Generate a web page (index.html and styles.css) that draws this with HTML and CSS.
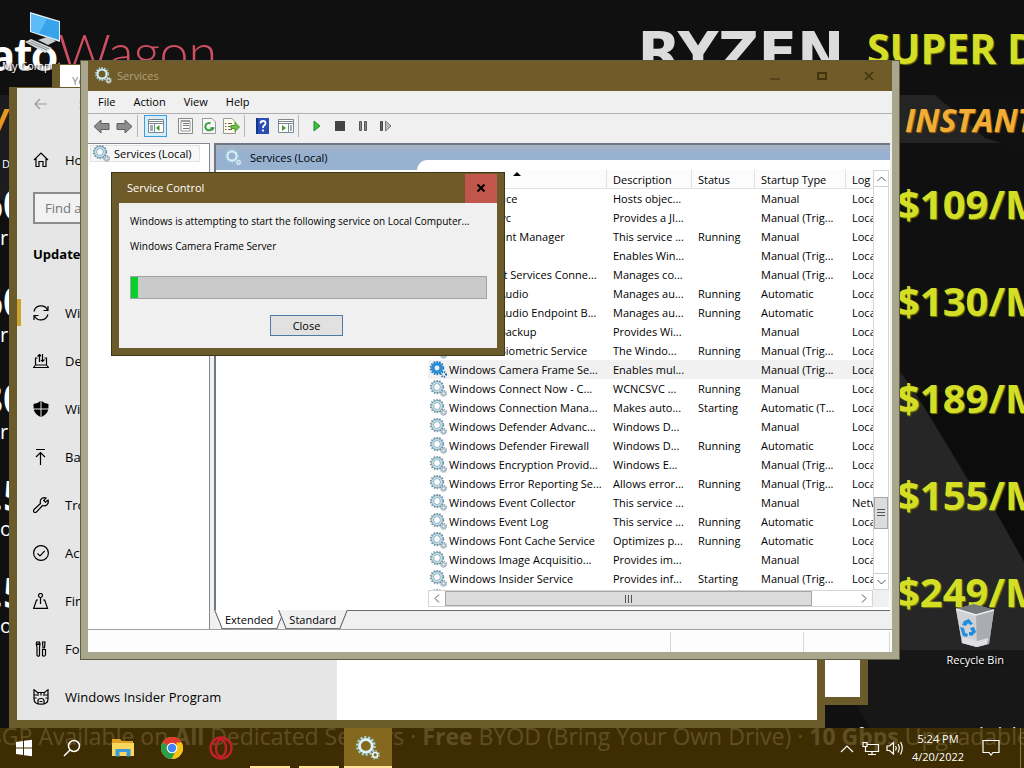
FILE: index.html
```
<!DOCTYPE html>
<html lang="en">
	<head>
		<meta charset="UTF-8">
		<title>Services</title>
		<link rel="stylesheet" href="styles.css">
	</head>
	<body>
		<!-- shared icons -->
		<svg class="defs" aria-hidden="true">
			<symbol id="gears" viewBox="0 0 17 17">
				<circle cx="7" cy="7" r="6.3" fill="none" stroke="#6f8f9d" stroke-width="1.8" stroke-dasharray="1.5 1.33"/>
				<circle cx="7" cy="7" r="4.4" fill="none" stroke="#7195a5" stroke-width="3"/>
				<circle cx="7" cy="7" r="4.4" fill="none" stroke="#bfdeea" stroke-width="1.9"/>
				<circle cx="13.6" cy="13.4" r="2.7" fill="none" stroke="#71899a" stroke-width="1.4" stroke-dasharray="1.1 1"/>
				<circle cx="13.6" cy="13.4" r="1.7" fill="none" stroke="#a9bfca" stroke-width="1.6"/>
			</symbol>
			<symbol id="gears-on" viewBox="0 0 17 17">
				<circle cx="7" cy="7" r="6.3" fill="none" stroke="#1272bd" stroke-width="1.8" stroke-dasharray="1.5 1.33"/>
				<circle cx="7" cy="7" r="4.2" fill="none" stroke="#2c8fd6" stroke-width="3.6"/>
				<circle cx="13.6" cy="13.4" r="2.4" fill="none" stroke="#1f6fae" stroke-width="2" stroke-dasharray="1.1 1"/>
			</symbol>
			<symbol id="gears-lit" viewBox="0 0 17 17">
				<circle cx="7" cy="7" r="6.1" fill="none" stroke="#9fd3e2" stroke-width="1.8" stroke-dasharray="1.5 1.24"/>
				<circle cx="7" cy="7" r="4.5" fill="none" stroke="#d8f1f7" stroke-width="2"/>
				<circle cx="13.6" cy="13.4" r="2.7" fill="none" stroke="#a9cbd8" stroke-width="1.2" stroke-dasharray="1.1 1"/>
				<circle cx="13.6" cy="13.4" r="1.7" fill="none" stroke="#e4f4f8" stroke-width="1.2"/>
			</symbol>
		</svg>

		<div class="wallpaper">
			<svg class="shapes" viewBox="0 0 1024 768" preserveAspectRatio="none" aria-hidden="true">
				<path d="M0 95H30V200H0z" fill="#1c1c1e"/>
				<path d="M880 95H1024V143H880z" fill="#242424"/>
				<path d="M935 95H1024V150L985 138L955 112z" fill="#111112"/>
				<path d="M880 372H900L915 392L968 480L1024 505V650H880z" fill="#262626"/>
				<path d="M915 392L970 480H1024V392z" fill="#0c0c0c"/>
				<path d="M992 505L1024 562V490H984z" fill="#0c0c0c"/>
				<path d="M825 650H1024V728H870z" fill="#171717"/>
			</svg>
			<div class="logo"><b>ato</b><i>Wagon</i></div>
			<div class="ryzen">RYZEN</div>
			<div class="super">SUPER DEALS</div>
			<div class="instant">INSTANT</div>
			<div class="edge-w">W</div>
			<div class="edge-d">D</div>
			<div class="specs">
				<p><b>60</b><span>re</span></p>
				<p><b>60</b><span>re</span></p>
				<p><b>80</b><span>r</span></p>
				<p><b>0.5</b><span>o</span></p>
				<p><b>0.5</b><span>o</span></p>
			</div>
			<div class="prices">
				<p>$109/Mo</p>
				<p>$130/Mo</p>
				<p>$189/Mo</p>
				<p>$155/Mo</p>
				<p>$249/Mo</p>
			</div>
			<div class="banner">BGP Available on <b>All</b> Dedicated Servers · <b>Free</b> BYOD (Bring Your Own Drive) · <b>10 Gbps</b> Upgradable</div>
		</div>

		<a class="shortcut computer" href="#">
			<svg width="36" height="44" viewBox="0 0 36 44">
				<path d="M5 0L35 9V30L5 20z" fill="#dff1fa"/>
				<path d="M6 2L34 10V28L6 19z" fill="#36a3ea"/>
				<path d="M6 2L22 7L14 22L6 19z" fill="#5cbcf5"/>
				<path d="M13 28L22 25L31 29L23 33z" fill="#c7cdd0"/>
				<path d="M0 30L6 27L27 36L20 41z" fill="#d5d8da"/>
				<path d="M3 30L22 38M6 29L24 37" stroke="#8b9094" fill="none"/>
			</svg>
			<span>My Computer</span>
		</a>
		<a class="shortcut bin" href="#">
			<svg width="40" height="44" viewBox="0 0 40 44">
				<path d="M1 5L19 0L39 6L34 40L22 43L7 39z" fill="#b9bcc0"/>
				<path d="M1 5L19 0L39 6L21 11z" fill="#77787a"/>
				<path d="M1 5L21 11L22 43L7 39z" fill="#cfd1d4"/>
				<path d="M21 11L39 6L34 40L22 43z" fill="#a9acb0"/>
				<path d="M1 5L21 11L39 6" fill="none" stroke="#eceeef" stroke-width="1.5"/>
				<path d="M8 33L22 37L33 34L32 40L22 43L7 39z" fill="#dedfe2"/>
				<path d="M9 17l5-2 4 5-3 1-2-2-2 3-4-1zM5 23l4 1 1 5 3 1-1 3-4-1zM15 24l4-1 2 5-4 4-3-1v-3h3z" fill="#1f8ee0"/>
			</svg>
			<span>Recycle Bin</span>
		</a>

		<div class="window back-window"><div class="page">Yo</div></div>

		<div class="window settings">
			<div class="sidebar">
				<div class="top">
					<button aria-label="Back"><svg width="14" height="12" viewBox="0 0 14 12"><path d="M13 6H1M6 1L1 6L6 11"/></svg></button>
					<span>Settings</span>
				</div>
				<a class="item home" href="#"><svg width="16" height="16" viewBox="0 0 16 16"><path d="M1 8L8 1L15 8M3 6.5V14.5H6V9.500H10V14.500H13V6.500"/></svg>Home</a>
				<input type="text" placeholder="Find a setting" aria-label="Find a setting">
				<h2>Update &amp; Security</h2>
				<a class="item current" href="#"><svg width="16" height="16" viewBox="0 0 16 16"><path d="M1 6.500A7.200 7.200 0 0 1 14.500 5M14.900 9.500A7.200 7.200 0 0 1 1.500 11M15 1V5.500H10.500M1 15V10.500H5.500"/></svg>Windows Update</a>
				<a class="item" href="#"><svg width="16" height="16" viewBox="0 0 16 16"><path d="M4.500 5H2.500V12H13.500V5H11.500M2.500 12L.5 14.500H15.500L13.500 12M6.500 9V1.500M4.500 3.500L6.500 1.500L8 3M9.500 1V8.500M8 7L9.500 8.500L11.500 6.500"/></svg>Delivery Optimization</a>
				<a class="item" href="#"><svg width="16" height="16" viewBox="0 0 16 16"><path class="solid" d="M7.500 0L7.500 7.500H.6L.5 3Q4 3 7.500 0zM8.500 0Q12 3 15.500 3L15.400 7.500H8.500zM.7 8.500H7.500V16Q2 13.500.7 8.500zM8.500 8.500H15.300Q14 13.500 8.500 16z"/></svg>Windows Security</a>
				<a class="item" href="#"><svg width="16" height="16" viewBox="0 0 16 16"><path d="M3 .5H12M7.500 16V3.500M3 8L7.500 3.500L12 8"/></svg>Backup</a>
				<a class="item" href="#"><svg width="16" height="16" viewBox="0 0 16 16"><path d="M1 12.500L7.500 6.500Q6.500 3 9 1.300Q11 .2 13 1L10.800 3.500L12.500 5.200L15 3Q16 6 14 7.800Q12 9.500 9.500 8.500L3.500 15Q2 16 1 15Q0 13.800 1 12.500z"/></svg>Troubleshoot</a>
				<a class="item" href="#"><svg width="16" height="16" viewBox="0 0 16 16"><circle cx="8" cy="8" r="7.400"/><path d="M4.500 8.500L7 11L11.800 5.800"/></svg>Activation</a>
				<a class="item" href="#"><svg width="16" height="16" viewBox="0 0 16 16"><circle cx="7.500" cy="2.500" r="2"/><path d="M7.500 4.500V11M5 7H3.500L.7 15.400H14.500L11.700 7H10"/></svg>Find my device</a>
				<a class="item" href="#"><svg width="16" height="16" viewBox="0 0 16 16"><path d="M4 .8Q3 2 3.500 4Q4 5.500 4 7V14.500Q5 16 6.500 14.500V7Q6.500 5 7 3.500Q7.200 1.800 6 .8V3.500H4zM9.500 1H12L11.500 7H10zM9.500 8.500H12.500V14Q11 16 9.500 14.500z"/></svg>For developers</a>
				<a class="item" href="#"><svg width="16" height="16" viewBox="0 0 16 16"><path d="M1 .8L4.500 3.500H11.500L15 .8V10Q15 15.200 8 15.200Q1 15.200 1 10zM1 6H4M1 9H3.500M12 6H15M12.500 9H15M5 15V11.500Q5 9.500 8 9.500Q11 9.500 11 11.500V15M5 4V7M8 4V6.500M11 4V7M6.500 12.500H9.500"/></svg>Windows Insider Program</a>
			</div>
		</div>

		<div class="window services">
			<div class="titlebar">
				<svg class="gear"><use href="#gears-lit"/></svg>
				<span>Services</span>
				<button aria-label="Minimize"><svg width="12" height="12" viewBox="0 0 12 12"><path d="M1 8H11V10H1z" fill="#54441c"/></svg></button>
				<button aria-label="Maximize"><svg width="12" height="12" viewBox="0 0 12 12"><path d="M2 3H10V9H2z" fill="none" stroke="#42340f" stroke-width="2"/></svg></button>
				<button aria-label="Close"><svg width="12" height="12" viewBox="0 0 12 12"><path d="M2 2L10 10M10 2L2 10" stroke="#42340f" stroke-width="1.600"/></svg></button>
			</div>
			<div class="menu">
				<button>File</button><button>Action</button><button>View</button><button>Help</button>
			</div>
			<div class="toolbar">
				<button aria-label="Back"><svg width="17" height="15" viewBox="0 0 17 15"><path d="M1 7.500L8 1V4.500H16V10.500H8V14z" fill="#8d8d8d" stroke="#5e5e5e"/></svg></button>
				<button aria-label="Forward"><svg width="17" height="15" viewBox="0 0 17 15"><path d="M16 7.500L9 1V4.500H1V10.500H9V14z" fill="#8d8d8d" stroke="#5e5e5e"/></svg></button>
				<i></i>
				<button class="pressed" aria-label="Show or hide console tree"><svg width="16" height="14" viewBox="0 0 16 14"><path d="M.5.5H15.500V13.500H.5z" fill="#fff" stroke="#7c8790"/><path d="M1 2.500H15M1 4.500H15M6.500 5V13" stroke="#7c8790"/><path d="M2 7H5M2 9H5M2 11H5" stroke="#3d5f7d"/><path d="M11.500 6V12L8 9z" fill="#3f9d2b"/></svg></button>
				<button aria-label="Properties"><svg width="16" height="16" viewBox="0 0 16 16"><path d="M.5.5H14.500V15.500H.5z" fill="#f6f6f6" stroke="#8b8b8b"/><path d="M3 3H12V13H3z" fill="#fff" stroke="#999"/><path d="M5 5.500H11M5 7.500H11M5 10.500H11M3 3H12" stroke="#777"/></svg></button>
				<button aria-label="Refresh"><svg width="14" height="16" viewBox="0 0 14 16"><path d="M.5.5H10L13.500 4V15.500H.5z" fill="#f8f8f8" stroke="#999"/><path d="M10.500 9A3.600 3.600 0 1 1 8.500 5.500" fill="none" stroke="#35a23b" stroke-width="2"/><path d="M7.500 9.500H13L10.500 13z" fill="#35a23b"/></svg></button>
				<button aria-label="Export list"><svg width="17" height="16" viewBox="0 0 17 16"><path d="M.5.5H9L12.500 4V15.500H.5z" fill="#fffbe9" stroke="#999"/><path d="M2 5.500H3.500M5 5.500H9M2 8.500H3.500M5 8.500H9M2 11.500H3.500M5 11.500H9" stroke="#666"/><path d="M8 7.500H12V4.500L16.500 9L12 13.500V10.500H8z" fill="#6fc04b" stroke="#4a9a2c"/></svg></button>
				<i></i>
				<button aria-label="Help"><svg width="13" height="16" viewBox="0 0 13 16"><path d="M0 0H13V16H0z" fill="#2a4eb5"/><path d="M0 0H2V16H0z" fill="#16348c"/><path d="M4.500 5.500Q4.500 3 7 3Q9.500 3 9.500 5.200Q9.500 6.500 8 7.500Q7 8.300 7 10M7 11.500V13.500" fill="none" stroke="#fff" stroke-width="1.800"/></svg></button>
				<button aria-label="Show or hide action pane"><svg width="16" height="14" viewBox="0 0 16 14"><path d="M.5.5H15.500V13.500H.5z" fill="#fff" stroke="#7c8790"/><path d="M1 2.500H15M1 4.500H15M10.500 5V13" stroke="#7c8790"/><path d="M12 7H14M12 9H14M12 11H14" stroke="#3d5f7d"/><path d="M4 6V12L8 9z" fill="#3f9d2b"/></svg></button>
				<i></i>
				<button aria-label="Start service"><svg width="12" height="12" viewBox="0 0 12 12"><path d="M3 1L9 6L3 11z" fill="#3cc03c" stroke="#23892a"/></svg></button>
				<button aria-label="Stop service"><svg width="12" height="12" viewBox="0 0 12 12"><path d="M1 1H11V11H1z" fill="#444"/></svg></button>
				<button aria-label="Pause service"><svg width="12" height="12" viewBox="0 0 12 12"><path d="M2.500 1.500H4.500V10.500H2.500zM7.500 1.500H9.500V10.500H7.500z" fill="#888" stroke="#555"/></svg></button>
				<button aria-label="Restart service"><svg width="12" height="12" viewBox="0 0 12 12"><path d="M.5 1.500H2.500V10.500H.5z" fill="#666" stroke="#444"/><path d="M5.500 1L11 6L5.500 11z" fill="#bbb" stroke="#777"/></svg></button>
			</div>
			<div class="main">
				<div class="tree"><a href="#"><svg class="gear"><use href="#gears"/></svg>Services (Local)</a></div>
				<div class="result">
					<div class="banner-head"><svg class="gear"><use href="#gears-lit"/></svg>Services (Local)</div>
					<div class="extended">
						<div class="list">
							<div class="rows">
								<table>
									<colgroup><col class="c1"><col class="c2"><col class="c3"><col class="c4"><col class="c5"></colgroup>
									<thead>
										<tr><th class="sorted">Name</th><th>Description</th><th>Status</th><th>Startup Type</th><th>Log On As</th></tr>
									</thead>
									<tbody id="services"></tbody>
								</table>
							</div>
							<div class="vscroll">
								<button aria-label="Scroll up"><svg width="9" height="6" viewBox="0 0 9 6"><path d="M.5 5L4.500 1L8.500 5"/></svg></button>
								<div class="before"></div>
								<div class="thumb"><svg width="8" height="8" viewBox="0 0 8 8"><path d="M0 .5H8M0 3.500H8M0 6.500H8"/></svg></div>
								<div class="after"></div>
								<button aria-label="Scroll down"><svg width="9" height="6" viewBox="0 0 9 6"><path d="M.5 1L4.500 5L8.500 1"/></svg></button>
							</div>
							<div class="hscroll">
								<button aria-label="Scroll left"><svg width="6" height="9" viewBox="0 0 6 9"><path d="M5 .5L1 4.500L5 8.500"/></svg></button>
								<div class="thumb"><svg width="8" height="8" viewBox="0 0 8 8"><path d="M.5 0V8M3.500 0V8M6.500 0V8"/></svg></div>
								<div class="after"></div>
								<button aria-label="Scroll right"><svg width="6" height="9" viewBox="0 0 6 9"><path d="M1 .5L5 4.500L1 8.500"/></svg></button>
							</div>
						</div>
					</div>
					<div class="tabs">
						<button class="tab active"><span>Extended</span></button><button class="tab"><span>Standard</span></button>
					</div>
				</div>
			</div>
			<div class="status"><span></span><span></span><span></span></div>
		</div>

		<div class="dialog" role="dialog" aria-labelledby="dialog-title">
			<div class="dialog-title">
				<span id="dialog-title">Service Control</span>
				<button aria-label="Close"><svg width="10" height="10" viewBox="0 0 10 10"><path d="M1.500 1.500L8.500 8.500M8.500 1.500L1.500 8.500"/></svg></button>
			</div>
			<div class="dialog-body">
				<p>Windows is attempting to start the following service on Local Computer...</p>
				<p>Windows Camera Frame Server</p>
				<progress max="100" value="2" aria-label="Starting service"></progress>
				<button class="close">Close</button>
			</div>
		</div>

		<div class="taskbar">
			<button aria-label="Start"><svg width="18" height="18" viewBox="0 0 18 18"><path d="M1 3L8 2V8.500H1zM9 1.800L17 .7V8.500H9zM1 9.500H8V16L1 15zM9 9.500H17V17.300L9 16.200z" fill="#fff"/></svg></button>
			<button class="search" aria-label="Search"><svg width="18" height="18" viewBox="0 0 18 18"><circle cx="11" cy="7" r="5.500" fill="none" stroke="#fff" stroke-width="1.500"/><path d="M7 11L1 17" stroke="#fff" stroke-width="1.500"/></svg></button>
			<button class="app" aria-label="File Explorer"><svg width="22" height="20" viewBox="0 0 22 20"><path d="M0 1H8L10 3H21V7H0z" fill="#e0a224"/><path d="M0 5H22V18H0z" fill="#fbd75c"/><path d="M3.500 18.500V11H18.500V18.500H14.500V14H7.500V18.500z" fill="#3d9bdc"/></svg></button>
			<button class="app" aria-label="Chrome"><svg width="22" height="22" viewBox="0 0 22 22"><circle cx="11" cy="11" r="11" fill="#f9c513"/><path d="M11 11L1.470 5.500A11 11 0 0 1 20.530 5.500z" fill="#e0392d"/><path d="M11 0A11 11 0 0 1 20.530 5.500H11z" fill="#e0392d"/><path d="M1.470 5.500A11 11 0 0 0 11 22L15 13L11 11z" fill="#2c9e49"/><path d="M20.530 5.500A11 11 0 0 1 10.500 22L15.500 13.500V5.500z" fill="#f9c513"/><circle cx="11" cy="11" r="5.300" fill="#fff"/><circle cx="11" cy="11" r="4.200" fill="#4285f4"/></svg></button>
			<button class="app" aria-label="Opera"><svg width="24" height="24" viewBox="0 0 24 24"><circle cx="12" cy="12" r="10.500" fill="none" stroke="#c3202b" stroke-width="2.400"/><ellipse cx="12" cy="12" rx="5" ry="8.500" fill="none" stroke="#c3202b" stroke-width="2.400"/></svg></button>
			<button class="app open" aria-label="Browser"></button>
			<button class="app open" aria-label="Settings"></button>
			<button class="app open focused" aria-label="Services"><svg width="24" height="24"><use href="#gears-lit"/></svg></button>
			<div class="tray">
				<button aria-label="Show hidden icons"><svg width="14" height="9" viewBox="0 0 14 9"><path d="M1 8L7 2L13 8"/></svg></button>
				<button aria-label="Network"><svg width="18" height="15" viewBox="0 0 18 15"><path d="M5.500 3.500H16.500V10.500H3.500V6M1 1.500H5V5.500H1zM10 11V13.500M6 13.500H14"/></svg></button>
				<button aria-label="Volume"><svg width="18" height="14" viewBox="0 0 18 14"><path d="M1 5V9.500H3.500L7.500 13V1.500L3.500 5zM9.500 5Q11 7 9.500 9.500M12 3Q14.500 7 12 11.500M14.500 1Q18 7 14.500 13.500"/></svg></button>
				<button class="clock">5:24 PM<br>4/20/2022</button>
				<button class="notes" aria-label="Notifications"><svg width="18" height="18" viewBox="0 0 18 18"><path d="M1 1.500H17V13.500H11L9 16L7 13.500H1z"/></svg></button>
				<button class="peek" aria-label="Show desktop"></button>
			</div>
		</div>

		<script>
			var list = [
				["WalletService","Hosts objec...","","Manual"],
				["Warp JIT Svc","Provides a JI...","","Manual (Trig..."],
				["Web Account Manager","This service ...","Running","Manual"],
				["WebClient","Enables Win...","","Manual (Trig..."],
				["Wi-Fi Direct Services Conne...","Manages co...","","Manual (Trig..."],
				["Windows Audio","Manages au...","Running","Automatic"],
				["Windows Audio Endpoint B...","Manages au...","Running","Automatic"],
				["Windows Backup","Provides Wi...","","Manual"],
				["Windows Biometric Service","The Windo...","Running","Manual (Trig..."],
				["Windows Camera Frame Se...","Enables mul...","","Manual (Trig..."],
				["Windows Connect Now - C...","WCNCSVC ...","Running","Manual"],
				["Windows Connection Mana...","Makes auto...","Starting","Automatic (T..."],
				["Windows Defender Advanc...","Windows D...","","Manual"],
				["Windows Defender Firewall","Windows D...","Running","Automatic"],
				["Windows Encryption Provid...","Windows E...","","Manual (Trig..."],
				["Windows Error Reporting Se...","Allows error...","Running","Manual (Trig..."],
				["Windows Event Collector","This service ...","","Manual"],
				["Windows Event Log","This service ...","Running","Automatic"],
				["Windows Font Cache Service","Optimizes p...","Running","Automatic"],
				["Windows Image Acquisitio...","Provides im...","","Manual"],
				["Windows Insider Service","Provides inf...","Starting","Manual (Trig..."],
				["Windows Installer","Adds, modi...","","Manual"]
			];
			var selected = 9;
			var html = "";
			for( var i = 0;i<list.length;i++ ){
				var s = list[i];
				var icon = i==selected ? "gears-on" : "gears";
				var logon = s[0]=="Windows Event Collector" ? "Network S..." : "Local Syste...";
				html += "<tr" + (i==selected ? " class='selected'" : "") + ">";
				html += "<td><svg class='gear'><use href='#" + icon + "'/></svg>" + s[0] + "</td>";
				html += "<td>" + s[1] + "</td><td>" + s[2] + "</td><td>" + s[3] + "</td><td>" + logon + "</td></tr>";
			}
			document.getElementById("services").innerHTML = html;
		</script>
	</body>
</html>
```
FILE: styles.css
```
*{
	box-sizing: border-box;
}
html,body{
	height: 100%;
}
body{
	margin: 0;
	position: relative;
	overflow: hidden;
	background: #101010;
	color: #000;
	font: 11px/16px "Open Sans", "Noto Sans", sans-serif;
}
p,h2{
	margin: 0;
}
a{
	color: inherit;
	text-decoration: none;
}
button{
	margin: 0;
	padding: 0;
	border: 0;
	background: none;
	color: inherit;
	font: inherit;
	display: flex;
	align-items: center;
	justify-content: center;
}
.defs{
	position: absolute;
	width: 0;
	height: 0;
}
.gear{
	width: 17px;
	height: 17px;
	flex: none;
}

/* wallpaper */
.wallpaper{
	position: absolute;
	inset: 0;
	overflow: hidden;
	background: #101010;
	white-space: nowrap;
}
.wallpaper div{
	position: absolute;
}
.shapes{
	position: absolute;
	width: 100%;
	height: 100%;
}
.logo{
	left: -9px;
	top: 21px;
	font: 52px/60px Lato, sans-serif;
	color: #fff;
}
.logo b{
	font-size: 46px;
	font-weight: 900;
}
.logo i{
	font-style: normal;
	font-weight: 300;
	color: #cf4f62;
}
.ryzen{
	right: 180px;
	top: 21px;
	font: bold 56px/62px "DejaVu Sans", sans-serif;
	color: #dcdcdc;
}
.super{
	left: 867px;
	top: 20px;
	font: bold 41px/56px "Open Sans", sans-serif;
	color: #d5de26;
	text-shadow: 1px 1px 1px #7c8208;
}
.instant{
	left: 905px;
	top: 98px;
	font: italic bold 32px/44px "Open Sans", sans-serif;
	color: #f2ad36;
	text-shadow: 1px 1px 1px #a8640c;
}
.edge-w{
	left: -24px;
	top: 98px;
	font: italic bold 34px/44px "Open Sans", sans-serif;
	color: #e59a1c;
}
.edge-d{
	left: 2px;
	top: 156px;
	color: #fff;
}
.specs{
	left: 0;
	top: 180px;
	width: 27px;
	overflow: hidden;
	color: #fff;
}
.specs p{
	height: 97px;
	display: flex;
	flex-direction: column;
	align-items: flex-end;
}
.specs b{
	font-size: 42px;
	line-height: 48px;
}
.specs span{
	align-self: flex-start;
	font-size: 20px;
	line-height: 20px;
}
.prices{
	left: 897px;
	top: 176px;
	font: bold 40px/56px "Open Sans", sans-serif;
	color: #d5de26;
	text-shadow: 1px 1px 1px #7c8208;
}
.prices p{
	height: 97px;
}
.banner{
	left: -13px;
	bottom: 16px;
	font-size: 23px;
	line-height: 32px;
	color: #d8d8d8;
}

/* desktop shortcuts */
.shortcut{
	position: absolute;
	display: flex;
	flex-direction: column;
	align-items: center;
	gap: 2px;
	color: #fff;
	text-shadow: 1px 1px 2px #000;
}
.computer{
	left: 2px;
	top: 12px;
}
.computer svg{
	margin-left: 12px;
}
.bin{
	right: 20px;
	top: 604px;
}
.bin span{
	margin-top: 2px;
}

/* windows */
.window{
	position: absolute;
	border: 8px solid #6b5b2b;
	border-top-width: 1px;
	background: #fff;
	overflow: hidden;
}
.back-window{
	left: 52px;
	top: 64px;
	right: 156px;
	bottom: 63px;
}
.page{
	padding: 8px 12px;
	color: #888;
}
.settings{
	left: 9px;
	top: 87px;
	right: 199px;
	bottom: 40px;
}
.sidebar{
	width: 320px;
	height: 100%;
	background: #e6e6e6;
	font-size: 13px;
}
.sidebar .top{
	height: 32px;
	padding-left: 17px;
	display: flex;
	align-items: center;
	gap: 31px;
	color: #888;
}
.sidebar svg{
	flex: none;
	fill: none;
	stroke: #000;
	stroke-width: 1.2;
}
.sidebar .top svg{
	stroke: #999;
}
.sidebar .solid{
	fill: #000;
	stroke: none;
}
.item{
	height: 48px;
	padding-left: 16px;
	display: flex;
	align-items: center;
	gap: 16px;
}
.home{
	margin-top: 16px;
}
.current{
	border-left: 4px solid transparent;
	border-image: linear-gradient(transparent 23%, #c9a52f 23%, #c9a52f 75%, transparent 75%) 1 4;
	padding-left: 12px;
}
.sidebar input{
	display: block;
	width: 288px;
	height: 32px;
	margin: 8px 16px 15px;
	padding: 0 10px;
	border: 2px solid #8b8b8b;
	background: #f2f2f2;
	font: 13px "Open Sans", sans-serif;
}
.sidebar input::placeholder{
	color: #757575;
}
.sidebar h2{
	height: 32px;
	margin: 0 16px 18px;
	font-size: 13px;
	line-height: 30px;
}

/* services console */
.services{
	left: 80px;
	top: 60px;
	right: 124px;
	bottom: 108px;
	border: 8px solid #a8a78d;
	border-top: 0;
	outline: 1px solid #5f5c42;
	outline-offset: -1px;
	background: #f0f0f0;
	display: flex;
	flex-direction: column;
}
.titlebar{
	height: 31px;
	flex: none;
	display: flex;
	align-items: center;
	padding-left: 7px;
	background: #715b28;
	color: #ada180;
}
.titlebar span{
	flex: 1;
	padding-left: 5px;
}
.titlebar button{
	width: 47px;
	height: 30px;
}
.menu{
	height: 23px;
	flex: none;
	display: flex;
	padding-left: 1px;
	border-bottom: 1px solid #b0b0b0;
}
.menu button{
	padding: 0 9px;
}
.toolbar{
	height: 29px;
	flex: none;
	display: flex;
	align-items: center;
	padding: 0 2px 5px;
}
.toolbar button{
	width: 23px;
	height: 22px;
}
.toolbar i{
	width: 1px;
	height: 22px;
	margin: 0 6px 0 1px;
	background: #b5b5b5;
}
.toolbar .pressed{
	margin-right: 7px;
	border: 1px solid #3c9fdb;
	background: #d6ecf8;
}
.main{
	flex: 1;
	min-height: 0;
	display: flex;
	gap: 4px;
	border-bottom: 1px solid #a0a0a0;
}
.tree{
	width: 122px;
	padding: 1px 2px;
	background: #fff;
	border: 1px solid #828790;
	border-width: 1px 1px 0 0;
}
.tree a{
	display: flex;
	align-items: center;
	gap: 4px;
	width: 110px;
	height: 17px;
	padding-left: 2px;
	border: 1px solid #e3e3e3;
	background: #f7f7f7;
}
.result{
	flex: 1;
	min-width: 0;
	margin-right: 2px;
	display: flex;
	flex-direction: column;
	border-top: 2px solid #6f7785;
}
.banner-head{
	position: relative;
	height: 25px;
	flex: none;
	display: flex;
	align-items: center;
	gap: 8px;
	padding-left: 9px;
	border-left: 2px solid #6f7785;
	background: linear-gradient(#a5b2c4, #97b1d1 40%, #97b1d1);
}
.banner-head::after{
	content: "";
	position: absolute;
	left: 201px;
	right: 0;
	bottom: 0;
	height: 10px;
	background: #fff;
	border-top-left-radius: 12px;
}
.extended{
	flex: 1;
	min-height: 0;
	display: flex;
	padding: 0 1px 3px 212px;
	border-left: 2px solid #6f7785;
	border-bottom: 1px solid #6a6a6a;
	background: #fff;
}
.list{
	flex: 1;
	min-width: 0;
	display: grid;
	grid-template: minmax(0, 1fr) 17px / minmax(0, 1fr) 16px;
	background: #f0f0f0;
}
.rows{
	overflow: hidden;
	background: #fff;
}
table{
	table-layout: fixed;
	width: 528px;
	border-collapse: separate;
	border-spacing: 0;
}
.c1{
	width: 179px;
}
.c2{
	width: 85px;
}
.c3{
	width: 63px;
}
.c4{
	width: 91px;
}
.c5{
	width: 110px;
}
th,td{
	height: 19px;
	padding: 0 0 0 6px;
	text-align: left;
	font-weight: normal;
	line-height: 17px;
	white-space: nowrap;
}
th{
	position: relative;
	border: 1px solid #e2e2e2;
	border-width: 0 1px 1px 0;
	background: #fcfcfc;
}
td:first-child{
	padding-left: 2px;
}
td .gear{
	margin-right: 2px;
	vertical-align: top;
}
.sorted{
	padding-left: 21px;
}
.sorted::after{
	content: "";
	position: absolute;
	left: 50%;
	top: 2px;
	margin-left: -4px;
	border: 4px solid transparent;
	border-top: 0;
	border-bottom-color: #000;
}
.selected{
	background: #f1f1f1;
}
.vscroll,.hscroll{
	display: flex;
	background: #fff;
	border: 1px solid #d5d5d5;
}
.vscroll{
	flex-direction: column;
}
.vscroll svg,.hscroll svg{
	fill: none;
	stroke: #555;
}
.vscroll button{
	height: 16px;
	border-bottom: 1px solid #cfcfcf;
}
.vscroll button:last-child{
	border: 0;
	border-top: 1px solid #cfcfcf;
}
.hscroll button{
	width: 16px;
}
.thumb{
	display: flex;
	align-items: center;
	justify-content: center;
	background: #dcdcdc;
	border: 1px solid #a6a6a6;
}
.vscroll .before{
	flex: 311;
}
.vscroll .thumb{
	flex: 30;
}
.vscroll .after{
	flex: 44;
}
.hscroll .thumb{
	flex: 369;
}
.hscroll .after{
	flex: 44;
}
.tabs{
	height: 18px;
	flex: none;
	display: flex;
	padding-left: 3px;
}
.tab{
	position: relative;
	height: 18px;
	padding: 0 8px;
}
.tab span{
	position: relative;
	z-index: 1;
}
.tab::before,.tab::after{
	content: "";
	position: absolute;
	top: -1px;
	bottom: 0;
	width: 60%;
	border-bottom: 1px solid #777;
	background: #f0f0f0;
}
.tab::before{
	left: 1px;
	border-left: 1px solid #555;
	transform: skewX(22deg);
}
.tab::after{
	right: 1px;
	border-right: 1px solid #555;
	transform: skewX(-22deg);
}
.active::before,.active::after{
	background: #fff;
}
.status{
	height: 22px;
	flex: none;
	display: flex;
	padding-right: 2px;
	background: #fdfdfd;
}
.status span{
	flex: none;
	width: 133px;
	margin-top: 2px;
	border-right: 1px solid #d7d7d7;
}
.status span:first-child{
	flex: 1;
}
.status span:last-child{
	width: 86px;
}

/* service control dialog */
.dialog{
	position: absolute;
	left: 111px;
	top: 172px;
	width: 394px;
	border: 8px solid #6b5b2b;
	border-top: 0;
	outline: 1px solid #3f3517;
	outline-offset: -1px;
	background: #f0f0f0;
}
.dialog-title{
	display: flex;
	align-items: center;
	height: 31px;
	padding-left: 8px;
	border-top: 1px solid #3f3517;
	background: #6f5b28;
	color: #fff;
}
.dialog-title span{
	flex: 1;
}
.dialog-title button{
	width: 32px;
	height: 29px;
	background: #c1574c;
}
.dialog-title path{
	stroke: #000;
	stroke-width: 2;
}
.dialog-body{
	padding: 10px 10px 12px 11px;
}
.dialog-body p{
	margin-bottom: 9px;
	font-size: 10px;
}
progress{
	display: block;
	width: 100%;
	height: 23px;
	margin: 22px 0 16px;
	appearance: none;
	border: 1px solid #a3a3a3;
	background: #c9c9c9;
}
progress::-webkit-progress-bar{
	background: #c9c9c9;
}
progress::-webkit-progress-value{
	background: #06d02c;
}
.close{
	width: 73px;
	height: 21px;
	margin: 0 0 0 140px;
	border: 1px solid #4d7ba6;
	background: #e1e1e1;
}

/* taskbar */
.taskbar{
	position: absolute;
	left: 0;
	right: 0;
	bottom: 0;
	height: 40px;
	display: flex;
	background: rgba(72, 51, 0, .84);
	color: #fff;
}
.taskbar button{
	width: 48px;
	flex: none;
}
.taskbar .search{
	margin-right: 2px;
}
.taskbar .app{
	margin-left: 1px;
	position: relative;
}
.open::after{
	content: "";
	position: absolute;
	left: 4px;
	right: 4px;
	bottom: 0;
	height: 2px;
	background: #ffe398;
}
.focused{
	background: #84681d;
}
.focused::after{
	left: 0;
	right: 0;
}
.tray{
	display: flex;
	margin-left: auto;
}
.tray button{
	width: 24px;
}
.tray svg{
	fill: none;
	stroke: #fff;
	stroke-width: 1.2;
}
.tray .clock{
	width: 62px;
	line-height: 18px;
}
.tray .notes{
	width: 44px;
}
.tray .peek{
	width: 4px;
	margin-left: 7px;
	border-left: 1px solid #8d7d50;
}
```
